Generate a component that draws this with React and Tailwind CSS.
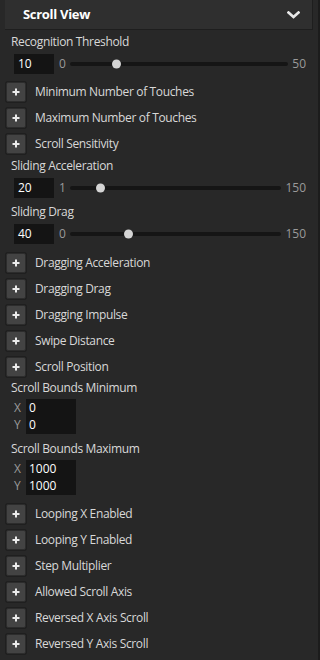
import React from "react";

const font = { fontFamily: '"Open Sans", "Noto Sans", sans-serif' };

function PlusRow({ label }) {
  return (
    <div className="flex h-[26px] items-center pl-[6px]">
      <div className="flex h-[20px] w-[20px] shrink-0 items-center justify-center rounded-[2px] border border-[#2c2c2c] bg-[#434343] shadow-[0_0_0_1px_#1f1f1f]">
        <svg width="8" height="8" viewBox="0 0 8 8">
          <path d="M4 0.5V7.5M0.5 4H7.5" stroke="#ececec" strokeWidth="2" />
        </svg>
      </div>
      <span className="ml-[9px] text-[12px] leading-[16px] tracking-[-0.35px] text-[#d8d8d8]">{label}</span>
    </div>
  );
}

function Label({ children, className = "" }) {
  return (
    <div className={"pl-[11px] text-[12px] leading-[16px] tracking-[-0.35px] text-[#d8d8d8] " + className}>{children}</div>
  );
}

function Slider({ label, value, min, max, className = "" }) {
  const pct = (value - min) / (max - min);
  return (
    <div className={className}>
      <Label>{label}</Label>
      <div className="mt-[4px] flex h-[20px] items-center pr-[12px]">
        <div className="ml-[14px] flex h-[20px] w-[40px] items-center bg-[#141414] pl-[4px] text-[12px] text-white">
          {value}
        </div>
        <span className="ml-[5px] w-[11px] text-[12px] text-[#9a9a9a]">{min}</span>
        <div className="relative h-[4px] flex-1 rounded-full bg-[#151515]">
          <div
            className="absolute top-1/2 h-[9px] w-[9px] -translate-y-1/2 rounded-full bg-[#d4d4d4]"
            style={{ left: `calc(${pct} * (100% - 9px))` }}
          />
        </div>
        <span className="ml-[4px] text-[12px] text-[#9a9a9a]">{max}</span>
      </div>
    </div>
  );
}

function Vec({ label, x, y, className = "" }) {
  return (
    <div className={className}>
      <Label>{label}</Label>
      <div className="mt-[3px] flex pl-[14px] text-[12px]">
        <div className="flex w-[12px] flex-col text-[#9a9a9a]">
          <span className="flex h-[17.5px] items-center">X</span>
          <span className="flex h-[17.5px] items-center">Y</span>
        </div>
        <div className="flex w-[50px] flex-col bg-[#141414] pl-[3px] text-white">
          <span className="flex h-[17.5px] items-center">{x}</span>
          <span className="flex h-[17.5px] items-center">{y}</span>
        </div>
      </div>
    </div>
  );
}

export default function App() {
  return (
    <div className="h-[660px] w-[320px] overflow-hidden border-r-2 border-[#1c1c1c] bg-[#282828]" style={font}>
      <div className="mx-[5px] flex h-[30px] items-center justify-between border-b border-r border-[#1e1e1e] bg-[#2f2f2f] pl-[18px] pr-[12px]">
        <span className="text-[13px] font-bold tracking-[-0.3px] text-white">Scroll View</span>
        <svg width="13" height="8" viewBox="0 0 13 8">
          <path d="M1.5 1.5L6.5 6L11.5 1.5" stroke="#e8e8e8" strokeWidth="2.6" fill="none" strokeLinecap="square" />
        </svg>
      </div>
      <Slider label="Recognition Threshold" value={10} min={0} max={50} className="mt-[4px]" />
      <div className="mt-[5px]">
        <PlusRow label="Minimum Number of Touches" />
        <PlusRow label="Maximum Number of Touches" />
        <PlusRow label="Scroll Sensitivity" />
      </div>
      <Slider label="Sliding Acceleration" value={20} min={1} max={150} className="mt-[1px]" />
      <Slider label="Sliding Drag" value={40} min={0} max={150} className="mt-[6px]" />
      <div className="mt-[6px]">
        <PlusRow label="Dragging Acceleration" />
        <PlusRow label="Dragging Drag" />
        <PlusRow label="Dragging Impulse" />
        <PlusRow label="Swipe Distance" />
        <PlusRow label="Scroll Position" />
      </div>
      <Vec label="Scroll Bounds Minimum" x="0" y="0" className="mt-[0px]" />
      <Vec label="Scroll Bounds Maximum" x="1000" y="1000" className="mt-[7px]" />
      <div className="mt-[6px]">
        <PlusRow label="Looping X Enabled" />
        <PlusRow label="Looping Y Enabled" />
        <PlusRow label="Step Multiplier" />
        <PlusRow label="Allowed Scroll Axis" />
        <PlusRow label="Reversed X Axis Scroll" />
        <PlusRow label="Reversed Y Axis Scroll" />
      </div>
    </div>
  );
}
